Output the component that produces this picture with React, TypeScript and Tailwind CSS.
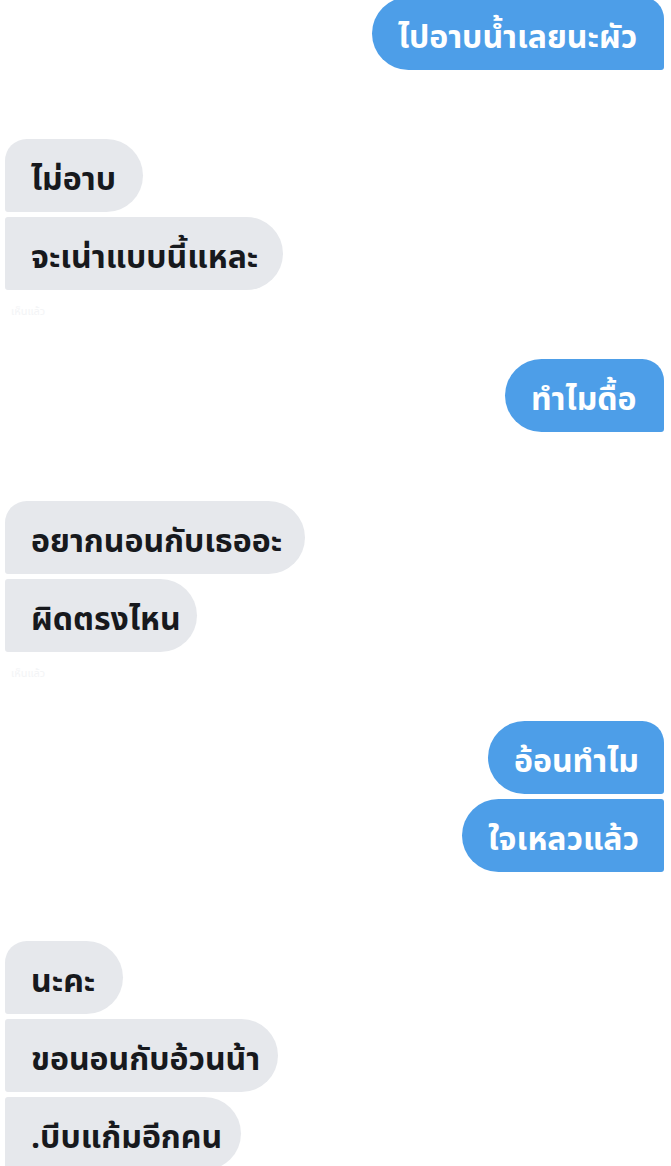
type Msg = { text: string; w: string };
type Group = { me: boolean; msgs: Msg[]; seen?: boolean };

const groups: Group[] = [
  { me: true, msgs: [{ text: 'ไปอาบน้ำเลยนะผัว', w: 'w-[292px]' }] },
  {
    me: false,
    seen: true,
    msgs: [
      { text: 'ไม่อาบ', w: 'w-[138px]' },
      { text: 'จะเน่าแบบนี้แหละ', w: 'w-[278px]' },
    ],
  },
  { me: true, msgs: [{ text: 'ทำไมดื้อ', w: 'w-[159px]' }] },
  {
    me: false,
    seen: true,
    msgs: [
      { text: 'อยากนอนกับเธออะ', w: 'w-[300px]' },
      { text: 'ผิดตรงไหน', w: 'w-[192px]' },
    ],
  },
  {
    me: true,
    msgs: [
      { text: 'อ้อนทำไม', w: 'w-[176px]' },
      { text: 'ใจเหลวแล้ว', w: 'w-[202px]' },
    ],
  },
  {
    me: false,
    msgs: [
      { text: 'นะคะ', w: 'w-[118px]' },
      { text: 'ขอนอนกับอ้วนน้า', w: 'w-[273px]' },
      { text: '.บีบแก้มอีกคน', w: 'w-[236px]' },
    ],
  },
];

function Bubble({ msg, me, first }: { msg: Msg; me: boolean; first: boolean }) {
  const shape = me
    ? first
      ? 'rounded-l-[37px] rounded-tr-[22px] rounded-br-[3px]'
      : 'rounded-l-[37px] rounded-r-[3px]'
    : first
      ? 'rounded-r-[37px] rounded-tl-[22px] rounded-bl-[3px]'
      : 'rounded-r-[37px] rounded-l-[3px]';
  return (
    <div
      className={`${msg.w} ${shape} h-[73px] shrink-0 flex items-center pt-[9px] px-[26px] text-[32px] leading-none font-bold whitespace-nowrap ${
        me ? 'bg-[#4d9ee8] text-white' : 'bg-[#e6e8ec] text-[#17191d]'
      }`}
    >
      {msg.text}
    </div>
  );
}

export default function App() {
  return (
    <div
      className="w-[671px] h-[1166px] overflow-hidden bg-white pl-[5px] pr-[7px]"
      style={{ fontFamily: '"Noto Sans Thai", "Noto Sans", "DejaVu Sans", sans-serif' }}
    >
      <div className="flex flex-col -mt-[3px]">
        {groups.map((g, gi) => (
          <div key={gi} className="flex flex-col">
            <div className={`flex flex-col gap-[5px] ${g.me ? 'items-end' : 'items-start'}`}>
              {g.msgs.map((m, i) => (
                <Bubble key={i} msg={m} me={g.me} first={i === 0} />
              ))}
            </div>
            <div className="h-[69px] shrink-0 pt-[8px] pl-[6px]">
              {g.seen && (
                <span className="text-[11px] leading-none text-[#f3f4f6]">เห็นแล้ว</span>
              )}
            </div>
          </div>
        ))}
      </div>
    </div>
  );
}
